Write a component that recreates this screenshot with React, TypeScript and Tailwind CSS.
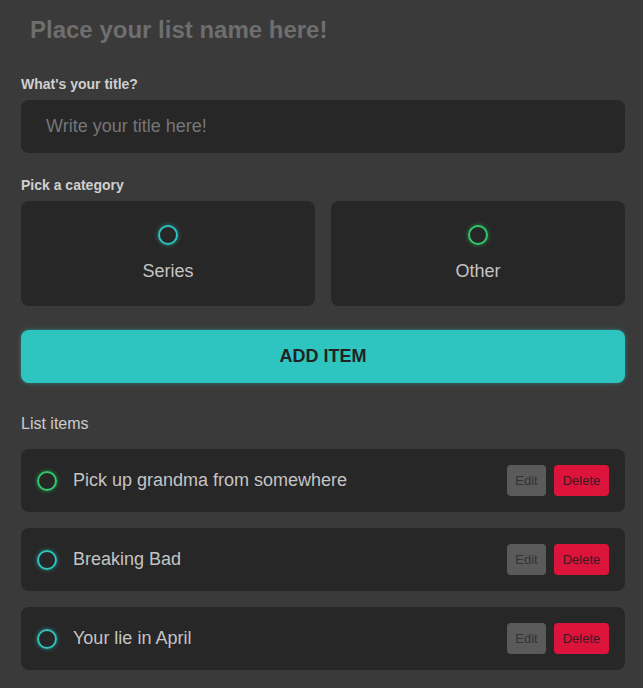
import React from "react";

type Item = { id: number; title: string; category: "series" | "other" };

const items: Item[] = [
  { id: 1, title: "Pick up grandma from somewhere", category: "other" },
  { id: 2, title: "Breaking Bad", category: "series" },
  { id: 3, title: "Your lie in April", category: "series" },
];

const Ring = ({ kind }: { kind: "series" | "other" }) =>
  kind === "series" ? (
    <span className="block w-[20px] h-[20px] rounded-full border-2 border-[#2ec4be] shadow-[0_0_4px_rgba(46,196,190,0.6)] shrink-0" />
  ) : (
    <span className="block w-[20px] h-[20px] rounded-full border-2 border-[#2ecc6a] shadow-[0_0_4px_rgba(46,204,106,0.6)] shrink-0" />
  );

export default function App() {
  return (
    <div className="min-h-[688px] bg-[#3a3a3a] pl-[21px] pr-[18px] pt-[16px] pb-[18px] font-['Liberation_Sans',Arial,sans-serif]">
      <div className="pl-[9px] text-[24px] leading-[28px] font-bold text-[#6e6e6e]">
        Place your list name here!
      </div>

      <div className="mt-[32px] text-[14px] leading-[16px] font-bold text-[#cfcfcf]">What's your title?</div>
      <div className="mt-[8px] h-[53px] rounded-lg bg-[#272727] flex items-center pl-[25px] text-[18px] text-[#767676]">
        Write your title here!
      </div>

      <div className="mt-[24px] text-[14px] leading-[16px] font-bold text-[#cfcfcf]">Pick a category</div>
      <div className="mt-[8px] grid grid-cols-2 gap-[16px]">
        <div className="h-[105px] rounded-lg bg-[#272727] flex flex-col items-center pt-[24px]">
          <Ring kind="series" />
          <span className="mt-[16px] text-[18px] leading-[21px] text-[#c4c4c4]">Series</span>
        </div>
        <div className="h-[105px] rounded-lg bg-[#272727] flex flex-col items-center pt-[24px]">
          <Ring kind="other" />
          <span className="mt-[16px] text-[18px] leading-[21px] text-[#c4c4c4]">Other</span>
        </div>
      </div>

      <button className="mt-[24px] w-full h-[53px] rounded-lg bg-[#2ec5c0] shadow-[0_0_4px_rgba(46,197,192,0.5)] text-[18px] font-bold text-[#222]">
        ADD ITEM
      </button>

      <div className="mt-[32px] text-[16px] leading-[18px] text-[#cccccc]">List items</div>
      <div className="mt-[16px] flex flex-col gap-[16px]">
        {items.map((item) => (
          <div key={item.id} className="h-[63px] rounded-lg bg-[#272727] flex items-center pl-[16px] pr-[16px]">
            <Ring kind={item.category} />
            <span className="ml-[16px] flex-1 text-[18px] text-[#c4c4c4]">{item.title}</span>
            <div className="flex gap-[8px]">
              <button className="h-[31px] w-[39px] rounded bg-[#5a5a5a] text-[13px] text-[#333]">Edit</button>
              <button className="h-[31px] w-[55px] rounded bg-[#dc143c] text-[13px] text-[#3a1a20]">Delete</button>
            </div>
          </div>
        ))}
      </div>
    </div>
  );
}
